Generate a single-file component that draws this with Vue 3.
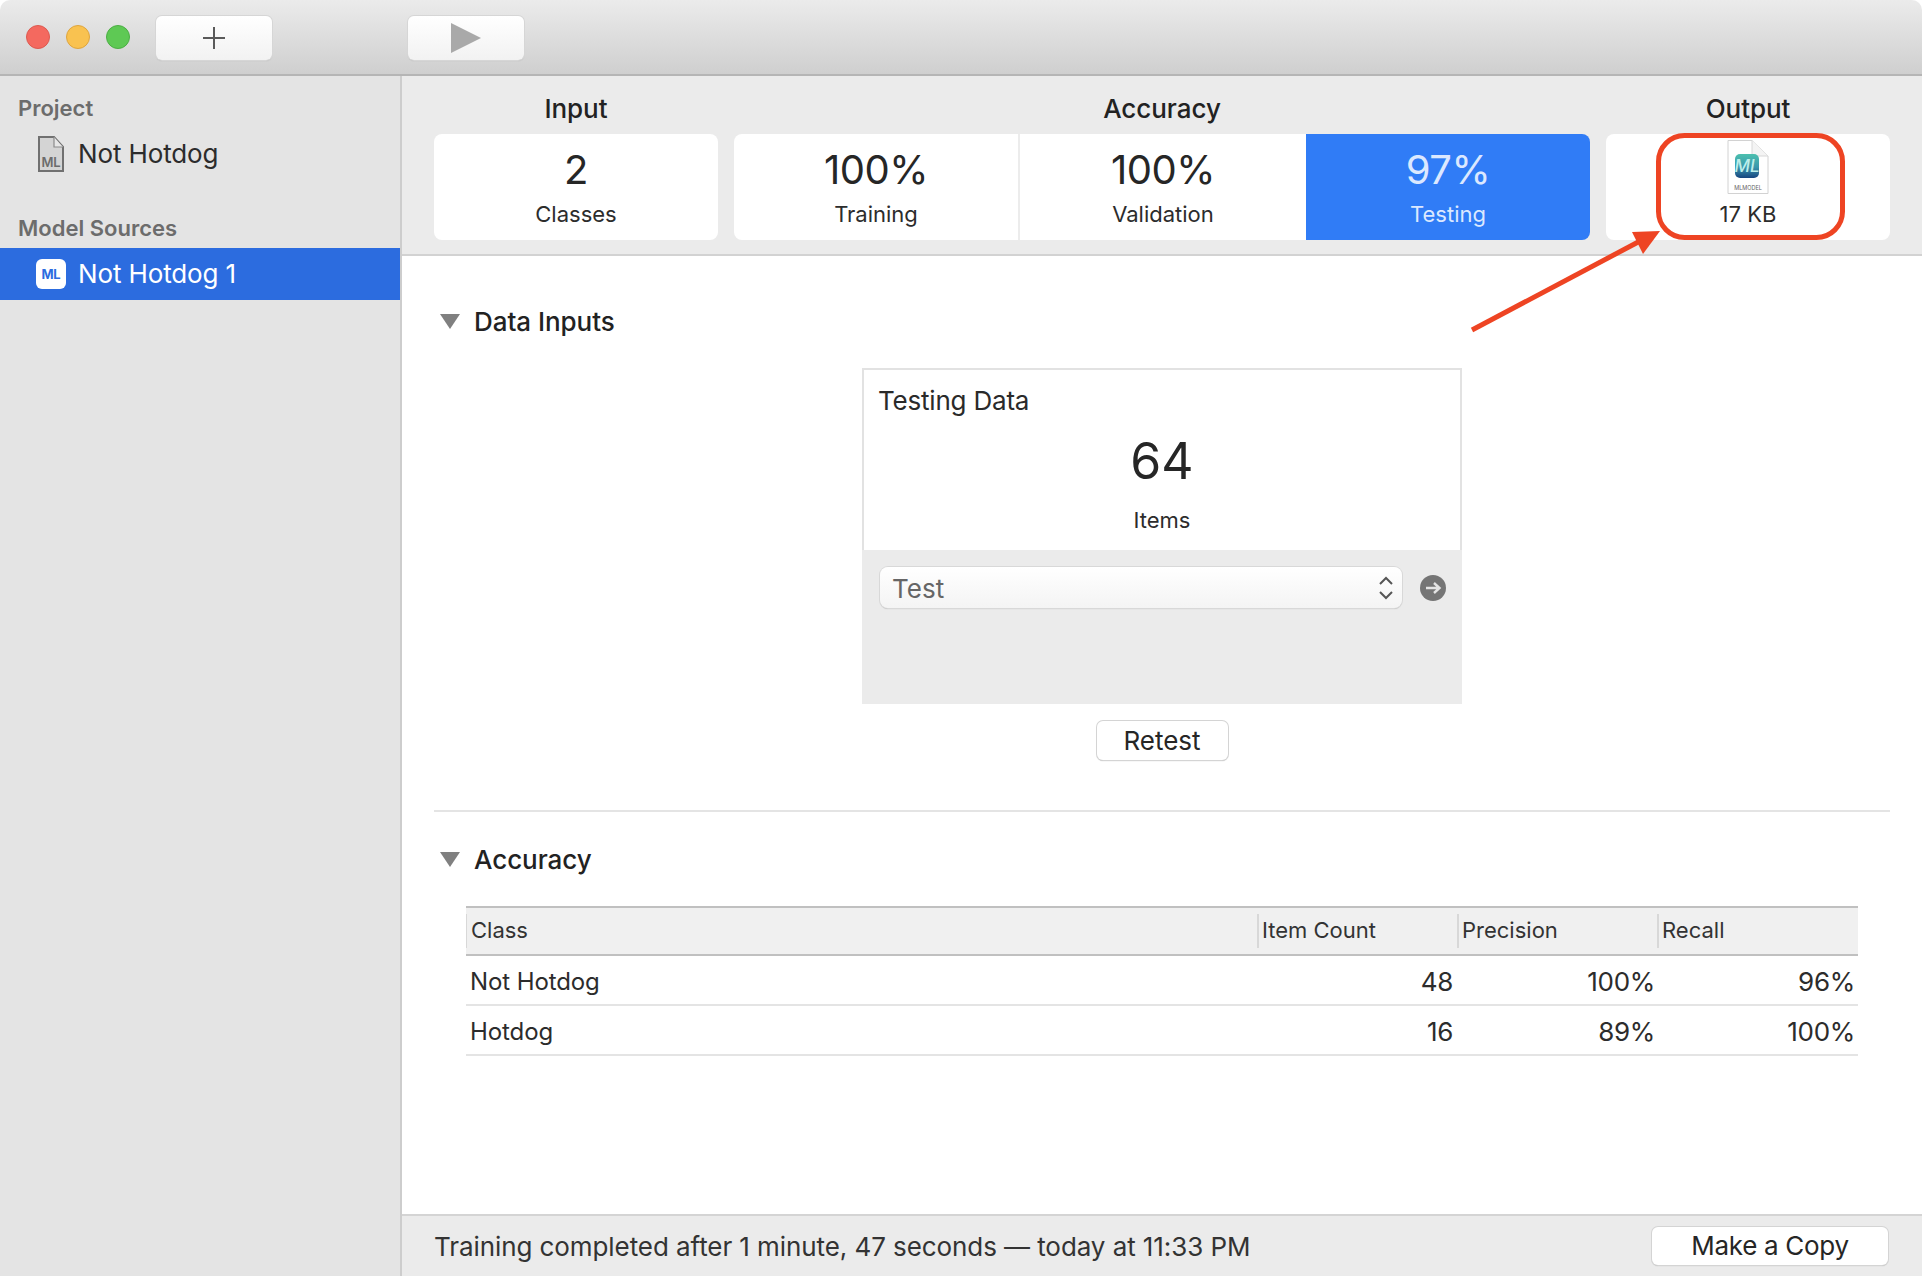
<script setup>
const cols = ['Class', 'Item Count', 'Precision', 'Recall']
const rows = [
  { name: 'Not Hotdog', count: 48, precision: '100%', recall: '96%' },
  { name: 'Hotdog', count: 16, precision: '89%', recall: '100%' }
]
const metrics = [
  { value: '100%', label: 'Training' },
  { value: '100%', label: 'Validation' },
  { value: '97%', label: 'Testing', active: true }
]
</script>

<template>
  <div class="window">
    <header class="titlebar">
      <div class="lights">
        <span class="light red"></span>
        <span class="light yellow"></span>
        <span class="light green"></span>
      </div>
      <button class="tool add">
        <svg width="24" height="24" viewBox="0 0 24 24"><path d="M12 1v22M1 12h22" stroke="#5a5a5a" stroke-width="2" fill="none"/></svg>
      </button>
      <button class="tool play">
        <svg width="30" height="30" viewBox="0 0 30 30"><path d="M0 0L30 15L0 30Z" fill="#a9a9a9"/></svg>
      </button>
    </header>

    <div class="content">
      <aside class="sidebar">
        <div class="side-title first">Project</div>
        <div class="side-item project">
          <svg class="doc" width="26" height="36" viewBox="0 0 26 36">
            <path d="M1 1H16L25 11V35H1Z" fill="#d4d4d4" stroke="#707070" stroke-width="2"/>
            <path d="M16 1V11H25" fill="#e6e6e6" stroke="#8a8a8a" stroke-width="1.2"/>
            <text x="13" y="31" text-anchor="middle" class="doc-text">ML</text>
          </svg>
          <span>Not Hotdog</span>
        </div>
        <div class="side-title second">Model Sources</div>
        <div class="side-item selected">
          <span class="ml-badge">ML</span>
          <span>Not Hotdog 1</span>
        </div>
      </aside>

      <main class="main">
        <section class="summary">
          <div class="group input-group">
            <div class="group-title">Input</div>
            <div class="cards">
              <div class="card"><div class="value">2</div><div class="label">Classes</div></div>
            </div>
          </div>
          <div class="group accuracy-group">
            <div class="group-title">Accuracy</div>
            <div class="cards">
              <div v-for="m in metrics" :key="m.label" class="card metric" :class="{ active: m.active }">
                <div class="value">{{ m.value }}</div>
                <div class="label">{{ m.label }}</div>
              </div>
            </div>
          </div>
          <div class="group output-group">
            <div class="group-title">Output</div>
            <div class="cards">
              <div class="card output">
                <svg class="file" width="42" height="54" viewBox="0 0 42 54">
                  <defs>
                    <linearGradient id="mlg" x1="0" y1="0" x2="0" y2="1">
                      <stop offset="0" stop-color="#4cc0ae"/>
                      <stop offset="0.55" stop-color="#3a97ad"/>
                      <stop offset="1" stop-color="#17457f"/>
                    </linearGradient>
                  </defs>
                  <path d="M1 .5H25L41 16V53.5H1Z" fill="#fff" stroke="#d2d2d2"/>
                  <path d="M25 .5V16H41" fill="#f4f4f4" stroke="#d8d8d8"/>
                  <rect x="8" y="14" width="24" height="24" rx="5" fill="url(#mlg)"/>
                  <text x="20" y="32" text-anchor="middle" class="file-ml">ML</text>
                  <text x="21" y="50" text-anchor="middle" class="file-label">MLMODEL</text>
                </svg>
                <div class="label size">17 KB</div>
              </div>
            </div>
          </div>
        </section>

        <section class="details">
          <div class="section-head data-head"><span class="tri"></span>Data Inputs</div>
          <div class="data-box">
            <div class="data-top">
              <div class="data-title">Testing Data</div>
              <div class="data-count">64</div>
              <div class="data-items">Items</div>
            </div>
            <div class="data-bottom">
              <div class="select">
                <span>Test</span>
                <svg width="16" height="26" viewBox="0 0 16 26"><path d="M2 9L8 3L14 9M2 17L8 23L14 17" fill="none" stroke="#555" stroke-width="2"/></svg>
              </div>
              <span class="go">
                <svg width="26" height="26" viewBox="0 0 26 26"><circle cx="13" cy="13" r="13" fill="#757575"/><path d="M6 13H19M14 8L19.5 13L14 18" fill="none" stroke="#e4e4e4" stroke-width="2.4"/></svg>
              </span>
            </div>
          </div>
          <div class="retest-row"><button class="push retest">Retest</button></div>
          <div class="rule"></div>
          <div class="section-head acc-head"><span class="tri"></span>Accuracy</div>
          <div class="table">
            <div class="thead">
              <div v-for="c in cols" :key="c" class="th">{{ c }}</div>
            </div>
            <div v-for="r in rows" :key="r.name" class="tr">
              <div class="td">{{ r.name }}</div>
              <div class="td num count">{{ r.count }}</div>
              <div class="td num prec">{{ r.precision }}</div>
              <div class="td num">{{ r.recall }}</div>
            </div>
          </div>
        </section>

        <footer class="status">
          <span>Training completed after 1 minute, 47 seconds — today at 11:33 PM</span>
          <button class="push copy">Make a Copy</button>
        </footer>
      </main>
    </div>

    <svg class="annotation" width="1922" height="1276" viewBox="0 0 1922 1276">
      <rect x="1658.5" y="135.5" width="184" height="102" rx="26" fill="none" stroke="#ee4423" stroke-width="5"/>
      <path d="M1472 330L1642 240" fill="none" stroke="#ee4423" stroke-width="5"/>
      <path d="M1632 232L1660 231L1643 254Z" fill="#ee4423"/>
    </svg>
  </div>
</template>

<style>
html, body { margin: 0; background: #fff; }
</style>

<style scoped>
.window {
  position: relative;
  width: 1922px;
  height: 1276px;
  overflow: hidden;
  display: flex;
  flex-direction: column;
  font-family: Inter, "Liberation Sans", sans-serif;
  color: #262626;
  border-radius: 10px 10px 0 0;
}
.titlebar {
  height: 74px;
  flex: none;
  display: flex;
  align-items: center;
  padding-left: 26px;
  box-sizing: content-box;
  background: linear-gradient(#ebebeb, #cfcfcf);
  border-bottom: 2px solid #b5b5b5;
}
.lights { display: flex; gap: 16px; }
.light { width: 24px; height: 24px; border-radius: 50%; box-sizing: border-box; border: 1px solid; }
.red { background: #f4695f; border-color: #dc5a50; }
.yellow { background: #f9c250; border-color: #dea53f; }
.green { background: #5ec954; border-color: #4cae44; }
.tool {
  width: 116px;
  height: 44px;
  padding: 0;
  margin-top: 2px;
  display: flex;
  align-items: center;
  justify-content: center;
  border: none;
  border-radius: 6px;
  background: linear-gradient(#fff, #f2f2f2);
  box-shadow: 0 0 0 1px #d6d6d6, 0 1px 1px #a8a8a8;
}
.add { margin-left: 26px; }
.play { margin-left: 136px; }

.content { flex: 1; display: flex; min-height: 0; }
.sidebar {
  width: 400px;
  flex: none;
  background: #e4e4e4;
  border-right: 2px solid #cdcdcd;
}
.side-title { font-size: 22px; font-weight: 600; color: #6c6c6c; padding-left: 18px; line-height: 26px; }
.first { margin-top: 19px; }
.second { margin-top: 35px; }
.side-item { display: flex; align-items: center; height: 52px; font-size: 26px; line-height: 52px; letter-spacing: -0.12px; }
.project { margin-top: 7px; padding-left: 38px; gap: 14px; color: #2c2c2c; }
.doc-text { font-size: 13px; font-weight: 600; fill: #6c6c6c; font-family: Inter, sans-serif; }
.selected { margin-top: 7px; padding-left: 36px; gap: 12px; background: #2c6cdf; color: #fff; }
.ml-badge {
  width: 30px;
  height: 30px;
  background: #fff;
  border-radius: 6px;
  color: #2c6cdf;
  font-size: 13px;
  font-weight: 700;
  line-height: 30px;
  text-align: center;
}

.main { flex: 1; min-width: 0; display: flex; flex-direction: column; background: #fff; }
.summary {
  height: 178px;
  flex: none;
  box-sizing: content-box;
  display: flex;
  gap: 16px;
  padding: 0 32px;
  background: #ebebeb;
  border-bottom: 2px solid #d2d2d2;
}
.group { display: flex; flex-direction: column; }
.input-group, .output-group { width: 284px; }
.accuracy-group { width: 856px; }
.group-title { height: 58px; line-height: 66px; text-align: center; font-size: 26px; font-weight: 500; color: #222; letter-spacing: -0.05px; }
.cards { display: flex; height: 106px; }
.card {
  flex: 1;
  background: #fff;
  border-radius: 8px;
  text-align: center;
  display: flex;
  flex-direction: column;
  align-items: center;
}
.value { margin-top: 10px; font-size: 40px; line-height: 52px; color: #262626; letter-spacing: -0.5px; }
.label { margin-top: 4px; font-size: 22px; line-height: 28px; color: #2c2c2c; }
.metric { flex: none; border-radius: 0; width: 286px; box-sizing: border-box; }
.metric:first-child { width: 286px; border-radius: 8px 0 0 8px; border-right: 2px solid #ececec; }
.metric:last-child { width: 284px; border-radius: 0 8px 8px 0; }
.metric.active { background: #307cf6; }
.metric.active .value, .metric.active .label { color: #dbe8ff; }
.file { margin-top: 6px; }
.file-ml { font-size: 17px; font-weight: 500; font-style: italic; fill: #bdeeea; font-family: Inter, sans-serif; }
.file-label { font-size: 5.5px; fill: #666; font-family: Inter, sans-serif; }
.size { margin-top: 6px; }

.details { flex: 1; min-height: 0; padding: 0 32px; }
.section-head { display: flex; align-items: center; height: 30px; font-size: 26px; font-weight: 500; color: #222; letter-spacing: -0.05px; }
.tri {
  width: 0;
  height: 0;
  margin: 0 14px 0 6px;
  border-left: 10px solid transparent;
  border-right: 10px solid transparent;
  border-top: 15px solid #808080;
}
.data-head { margin-top: 50px; }
.data-box {
  width: 600px;
  height: 336px;
  margin: 32px auto 0;
  background: #ebebeb;
  display: flex;
  flex-direction: column;
}
.data-top {
  height: 182px;
  box-sizing: border-box;
  background: #fff;
  border: 2px solid #e2e2e2;
  border-bottom: none;
  text-align: center;
  display: flex;
  flex-direction: column;
}
.data-title { margin: 15px 0 0 14px; text-align: left; font-size: 26px; line-height: 32px; color: #2a2a2a; letter-spacing: -0.2px; }
.data-count { margin-top: 14px; font-size: 50px; line-height: 60px; color: #262626; }
.data-items { margin-top: 15px; font-size: 22px; line-height: 28px; color: #2c2c2c; }
.data-bottom { display: flex; align-items: flex-start; padding: 17px 0 0 18px; }
.select {
  width: 522px;
  height: 41px;
  box-sizing: border-box;
  padding: 2px 8px 0 12px;
  display: flex;
  align-items: center;
  justify-content: space-between;
  border-radius: 8px;
  background: linear-gradient(#fff, #f4f4f4);
  box-shadow: 0 0 0 1px #d8d8d8, 0 1px 1px #b4b4b4;
  font-size: 26px;
  color: #666;
}
.select svg { margin-top: -2px; }
.go { margin: 8px 0 0 18px; height: 26px; }
.push {
  padding: 0;
  border: none;
  border-radius: 6px;
  background: #fff;
  box-shadow: 0 0 0 1px #d4d4d4, 0 1px 1px #a8a8a8;
  font-family: inherit;
  font-size: 26px;
  color: #262626;
}
.retest-row { display: flex; justify-content: center; margin-top: 17px; }
.retest { width: 131px; height: 39px; }
.rule { height: 2px; margin-top: 50px; background: #e4e4e4; }
.acc-head { margin-top: 32px; }
.table { margin: 32px 32px 0; }
.thead {
  display: grid;
  grid-template-columns: 791px 200px 200px 201px;
  height: 46px;
  align-items: center;
  background: #f0f0f0;
  border-top: 2px solid #c0c0c0;
  border-bottom: 2px solid #c0c0c0;
}
.th {
  height: 34px;
  line-height: 32px;
  padding-left: 3px;
  border-left: 2px solid #d8d8d8;
  font-size: 22px;
  color: #333;
}
.th:first-child { border-left-width: 1px; padding-left: 4px; }
.tr {
  display: grid;
  grid-template-columns: 791px 200px 200px 201px;
  height: 48px;
  align-items: center;
  border-bottom: 2px solid #e4e4e4;
}
.td { font-size: 24px; line-height: 44px; padding: 4px 0 0 4px; color: #2c2c2c; letter-spacing: -0.1px; }
.num { text-align: right; padding-right: 3px; font-size: 26px; letter-spacing: -0.3px; }
.count { padding-right: 4px; }
.prec { padding-right: 2px; }
.status {
  height: 60px;
  flex: none;
  box-sizing: content-box;
  display: flex;
  align-items: center;
  justify-content: space-between;
  padding: 0 34px 0 32px;
  background: #ebebeb;
  border-top: 2px solid #d4d4d4;
  font-size: 26px;
  letter-spacing: -0.08px;
  color: #333;
}
.copy { width: 236px; height: 38px; margin-top: -1px; letter-spacing: -0.3px; }
.annotation { position: absolute; left: 0; top: 0; pointer-events: none; }
</style>
